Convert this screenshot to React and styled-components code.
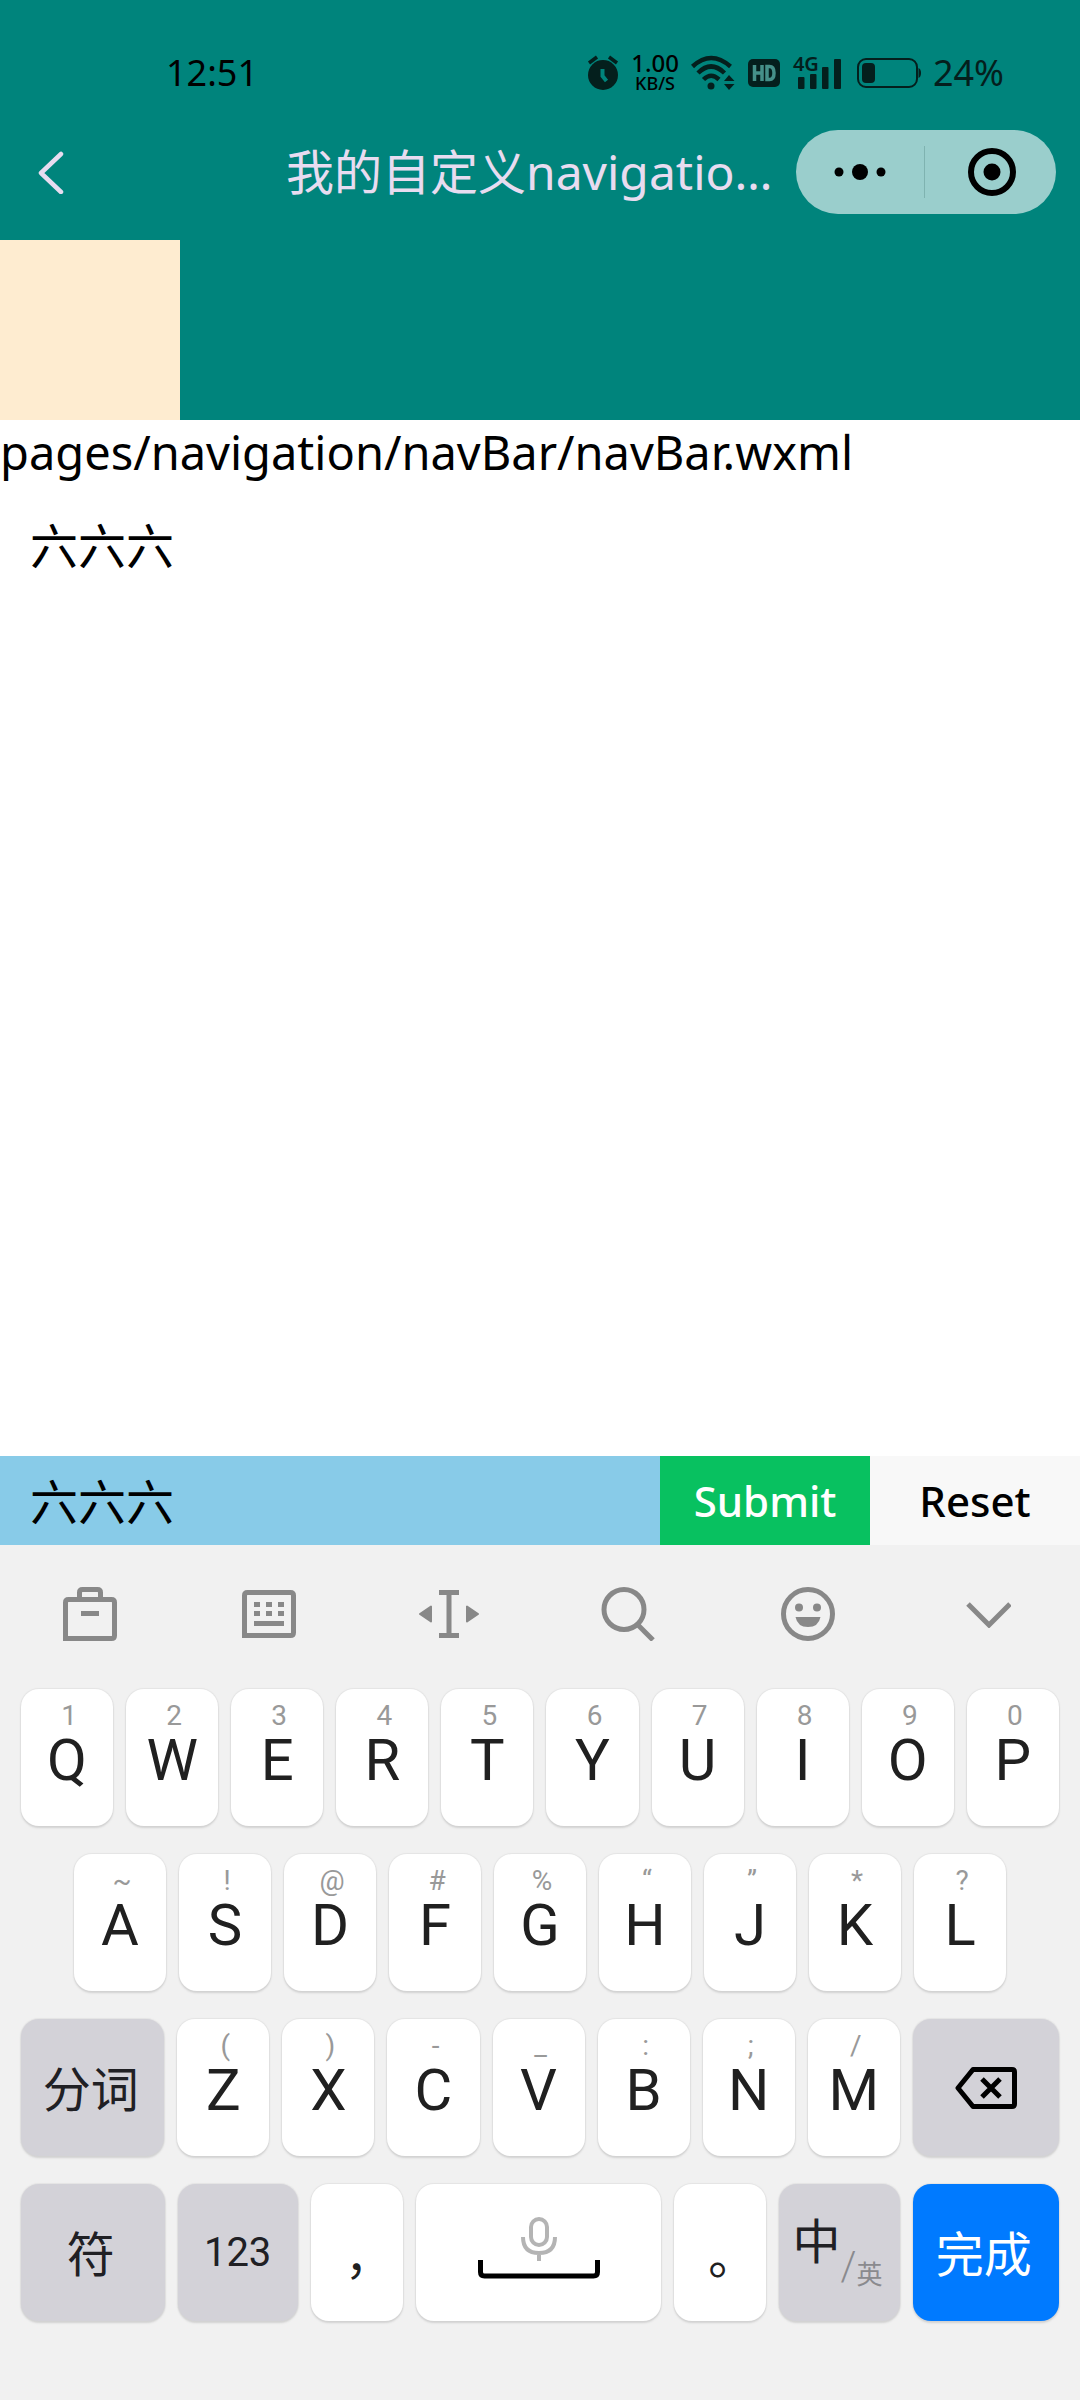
import React, { useState } from "react";
import styled, { createGlobalStyle } from "styled-components";

const latin = `"Noto Sans", "Noto Sans CJK SC", sans-serif`;
const keyFont = `Roboto, "Noto Sans CJK SC", sans-serif`;

const GlobalStyle = createGlobalStyle`
  *, *::before, *::after { box-sizing: border-box; }
  html, body, #root { height: 100%; }
  body { margin: 0; background: #fff; font-family: ${latin}; color: #000; }
  button, input { font: inherit; color: inherit; border: 0; margin: 0; padding: 0; background: none; }
  svg { display: block; flex: none; }
`;

const Screen = styled.div`
  min-height: 100%;
  display: flex;
  flex-direction: column;
`;

const Header = styled.header`
  background: #00847c;
`;

const StatusBar = styled.div`
  height: 130px;
  padding: 16px 76px 0 166px;
  display: flex;
  align-items: center;
  justify-content: space-between;
  font-size: 36px;
  line-height: 48px;
`;

const StatusIcons = styled.div`
  display: flex;
  align-items: center;
  gap: 12px;
  color: #041f1d;
`;

const Speed = styled.div`
  display: flex;
  flex-direction: column;
  align-items: center;
  font-size: 24px;
  font-weight: 500;
  line-height: 20px;
  color: #000;
`;

const SpeedUnit = styled.span`
  font-size: 18px;
`;

const NavBar = styled.nav`
  height: 110px;
  padding: 0 24px 26px 32px;
  display: flex;
  align-items: center;
`;

const BackButton = styled.button`
  width: 254px;
  height: 84px;
  display: flex;
  align-items: center;
`;

const Title = styled.h1`
  flex: 1;
  min-width: 0;
  margin: 0;
  font-size: 48px;
  font-weight: 400;
  line-height: 84px;
  color: #e8dcf0;
  white-space: nowrap;
`;

const Capsule = styled.div`
  width: 260px;
  height: 84px;
  border-radius: 42px;
  background: #9acecc;
  display: flex;
  align-items: center;
`;

const CapsuleButton = styled.button`
  flex: 1;
  height: 52px;
  display: flex;
  align-items: center;
  justify-content: center;

  & + & {
    border-left: 1px solid #7fb3b0;
    padding-left: 4px;
  }
`;

const Swatch = styled.div`
  width: 180px;
  height: 180px;
  background: #feecd0;
`;

const Content = styled.main`
  flex: 1;
`;

const Line = styled.p`
  margin: 0;
  padding: ${(p) => (p.$inset ? "30px" : "0")};
  font-size: ${(p) => (p.$inset ? 48 : 47)}px;
  line-height: 64px;
`;

const Form = styled.form`
  height: 89px;
  display: flex;
`;

const TextField = styled.input`
  flex: 1;
  min-width: 0;
  padding: 0 30px 4px;
  background: #88cbe8;
  font-size: 48px;
  outline: none;
  border-radius: 0;
`;

const FormButton = styled.button`
  width: 210px;
  font-size: 42px;
  font-weight: 500;
  color: ${(p) => (p.$primary ? "#fff" : "#000")};
  background: ${(p) => (p.$primary ? "#08c160" : "#f8f8f8")};
`;

const Keyboard = styled.section`
  background: #f1f1f1;
  padding-bottom: 79px;
  font-family: ${keyFont};
  color: #202020;
`;

const Toolbar = styled.div`
  height: 144px;
  padding: 0 3px 6px 0;
  display: grid;
  grid-template-columns: repeat(6, 1fr);
  color: #888;
`;

const ToolButton = styled.button`
  display: flex;
  align-items: center;
  justify-content: center;
`;

const Rows = styled.div`
  display: flex;
  flex-direction: column;
  gap: 28px;
`;

const Row = styled.div`
  display: flex;
  gap: 13px;
  padding: 0 ${(p) => (p.$inset ? 74 : 21)}px;
`;

const tones = {
  light: { bg: "#fff", fg: "#202020" },
  dark: { bg: "#d3d2d8", fg: "#202024" },
  blue: { bg: "#007aff", fg: "#fff" },
};

const Key = styled.button`
  flex: ${(p) => p.$grow || 91} 1 0;
  min-width: 0;
  height: 137px;
  padding: 0 4px 4px 0;
  border-radius: 18px;
  display: flex;
  flex-direction: column;
  align-items: center;
  justify-content: center;
  font-size: 48px;
  color: ${(p) => tones[p.$tone || "light"].fg};
  background: ${(p) => tones[p.$tone || "light"].bg};
  box-shadow: 0 2px 2px #d2d2d2, 0 0 1px 1px #e4e4e4;
`;

const LetterKey = styled(Key)`
  justify-content: flex-start;
  padding: 11px 2px 0;
  font-size: 58px;
  line-height: 64px;
`;

const Hint = styled.span`
  height: 28px;
  padding-left: 4px;
  font-size: 28px;
  line-height: 32px;
  color: #999;
`;

const CenteredKey = styled(Key)`
  padding: 0 2px;
  font-size: 40px;
`;

const PunctuationKey = styled(Key)`
  padding: 0 2px;
  font-family: "Noto Sans CJK SC", sans-serif;
  font-feature-settings: "halt";
`;

const LanguageLabel = styled.span`
  height: 80px;
  display: flex;
  align-items: flex-end;
`;

const LanguageMain = styled.span`
  align-self: flex-start;
  line-height: 64px;
`;

const LanguageSlash = styled.span`
  font-size: 40px;
  font-weight: 300;
  line-height: 48px;
  color: #8a8a8e;
`;

const LanguageAlt = styled.span`
  font-size: 26px;
  line-height: 32px;
  color: #8a8a8e;
`;

function AlarmIcon() {
  return (
    <svg width="32" height="36" viewBox="0 0 32 36">
      <circle cx="16" cy="20" r="15" fill="currentColor" />
      <path d="M2 8 10 2M30 8 22 2" stroke="currentColor" strokeWidth="3.500" />
      <path d="M15.500 14v7l4 5" fill="none" stroke="#00847c" strokeWidth="4" />
    </svg>
  );
}

function WifiIcon() {
  return (
    <svg width="44" height="36" viewBox="0 0 44 36">
      <g fill="none" stroke="currentColor" strokeWidth="4.500">
        <path d="M1.500 11.500Q20 -5.500 39.500 11.500" />
        <path d="M7 18Q20 5 33.500 18" />
        <path d="M12.500 24.500Q20 17 28 24.500" />
      </g>
      <circle cx="20" cy="31" r="3.500" fill="currentColor" />
      <path d="M33 26l5-6 5.500 6zM33 29l5 6 5.500-6z" fill="currentColor" />
    </svg>
  );
}

function HdIcon() {
  return (
    <svg width="34" height="30" viewBox="0 0 34 30">
      <rect x="1" y="1" width="32" height="28" rx="5" fill="currentColor" />
      <path
        d="M7.500 7v16M15 7v16M7.500 15H15M20 8.500v13h2.500q4.500 0 4.500-6.500t-4.500-6.500z"
        fill="none"
        stroke="#459089"
        strokeWidth="3.500"
      />
    </svg>
  );
}

const Signal = styled.div`
  display: grid;
  width: 50px;
  height: 34px;
  font-size: 20px;
  font-weight: 600;
  line-height: 16px;

  > * {
    grid-area: 1 / 1;
  }
`;

function SignalIcon() {
  return (
    <Signal>
      <span>4G</span>
      <svg width="50" height="34" viewBox="0 0 50 34" fill="currentColor">
        <rect x="5" y="21" width="6.500" height="12" rx="1" />
        <rect x="17" y="18" width="6.500" height="15" rx="1" />
        <rect x="29" y="11" width="6.500" height="22" rx="1" />
        <rect x="41" y="3" width="7" height="30" rx="1" />
      </svg>
    </Signal>
  );
}

function BatteryIcon() {
  return (
    <svg width="66" height="32" viewBox="0 0 66 32">
      <rect x="3" y="2" width="59" height="28" rx="8" fill="none" stroke="currentColor" strokeWidth="2" />
      <rect x="7" y="6" width="13" height="20" rx="4" fill="currentColor" />
      <path d="M63.500 11q2.500 1 2.500 5t-2.500 5z" fill="currentColor" />
    </svg>
  );
}

const stroke = { fill: "none", stroke: "currentColor", strokeWidth: 5 };

const tools = [
  {
    name: "Toolbox",
    icon: (
      <svg width="54" height="54" viewBox="0 0 54 54" {...stroke}>
        <path d="M2.500 51.500V15.500q0-3 3-3h43q3 0 3 3v33q0 3-3 3zM16.500 12V5.500q0-3 3-3h15q3 0 3 3V12M18 26.500h18" />
      </svg>
    ),
  },
  {
    name: "Keyboard layout",
    icon: (
      <svg width="54" height="48" viewBox="0 0 54 48" {...stroke}>
        <path d="M2.500 45.500V5.500q0-3 3-3h43q3 0 3 3v37q0 3-3 3zM12 33.500h30" />
        <path d="M12 14.500h6m6 0h6m6 0h6M12 23.500h6m6 0h6m6 0h6" />
      </svg>
    ),
  },
  {
    name: "Move cursor",
    icon: (
      <svg width="60" height="48" viewBox="0 0 60 48" {...stroke}>
        <path d="M20 2.500h20M20 45.500h20M30 2.500v43" />
        <path d="M1 24 12 16.500v15zM59 24 48 16.500v15z" fill="currentColor" strokeWidth="2" strokeLinejoin="round" />
      </svg>
    ),
  },
  {
    name: "Search",
    icon: (
      <svg width="54" height="54" viewBox="0 0 54 54" {...stroke}>
        <circle cx="23" cy="22.500" r="20" />
        <path d="M37 38 52 53" />
      </svg>
    ),
  },
  {
    name: "Emoji",
    icon: (
      <svg width="54" height="54" viewBox="0 0 54 54">
        <circle cx="27" cy="27" r="24.500" {...stroke} />
        <circle cx="18" cy="20.500" r="4" fill="currentColor" />
        <circle cx="36" cy="20.500" r="4" fill="currentColor" />
        <path d="M14.500 30h25q-2 10-12.500 10t-12.500-10z" fill="currentColor" />
      </svg>
    ),
  },
  {
    name: "Hide keyboard",
    icon: (
      <svg width="48" height="28" viewBox="0 0 48 28" {...stroke}>
        <path d="M5 4 26 25 47 4" />
      </svg>
    ),
  },
];

function BackspaceIcon() {
  return (
    <svg width="62" height="42" viewBox="0 0 62 42" fill="none" stroke="#000" strokeWidth="5" strokeLinejoin="round">
      <path d="M3 21 18 2.500h39q2.500 0 2.500 2.500v32q0 2.500-2.500 2.500H18z" />
      <path d="M27 12 45 30M45 12 27 30" />
    </svg>
  );
}

function SpaceIcon() {
  return (
    <svg width="122" height="76" viewBox="0 0 122 76" fill="none">
      <g stroke="#b4b4b4" strokeWidth="4">
        <rect x="53" y="4" width="16" height="26" rx="8" />
        <path d="M45 22q0 16 16 16t16-16M61 38v8" />
      </g>
      <path d="M2.500 45v12q0 4 4 4h109q4 0 4-4V45" stroke="#000" strokeWidth="5" />
    </svg>
  );
}

const row1 = [..."QWERTYUIOP"].map((c, i) => [c, "1234567890"[i]]);
const row2 = [..."ASDFGHJKL"].map((c, i) => [c, "~!@#%“”*?"[i]]);
const row3 = [..."ZXCVBNM"].map((c, i) => [c, "()-_:;/"[i]]);

const letters = (list) =>
  list.map(([letter, hint]) => (
    <LetterKey key={letter} type="button">
      <Hint>{hint}</Hint>
      {letter}
    </LetterKey>
  ));

export default function App() {
  const [text, setText] = useState("六六六");

  return (
    <Screen>
      <GlobalStyle />
      <Header>
        <StatusBar>
          <span>12:51</span>
          <StatusIcons>
            <AlarmIcon />
            <Speed>
              1.00
              <SpeedUnit>KB/S</SpeedUnit>
            </Speed>
            <WifiIcon />
            <HdIcon />
            <SignalIcon />
            <BatteryIcon />
            <span>24%</span>
          </StatusIcons>
        </StatusBar>
        <NavBar>
          <BackButton type="button" aria-label="Back">
            <svg width="40" height="44" viewBox="0 0 40 44">
              <path d="M29 4 9 23 29 42" fill="none" stroke="#e8dcf0" strokeWidth="4.500" strokeLinecap="round" strokeLinejoin="round" />
            </svg>
          </BackButton>
          <Title>我的自定义navigatio…</Title>
          <Capsule>
            <CapsuleButton type="button" aria-label="More">
              <svg width="52" height="18" viewBox="0 0 52 18">
                <circle cx="5" cy="9" r="4.500" />
                <circle cx="26" cy="9" r="8" />
                <circle cx="47" cy="9" r="4.500" />
              </svg>
            </CapsuleButton>
            <CapsuleButton type="button" aria-label="Close">
              <svg width="48" height="48" viewBox="0 0 48 48">
                <circle cx="24" cy="24" r="21" fill="none" stroke="#000" strokeWidth="6" />
                <circle cx="24" cy="24" r="8.500" />
              </svg>
            </CapsuleButton>
          </Capsule>
        </NavBar>
        <Swatch />
      </Header>

      <Content>
        <Line>pages/navigation/navBar/navBar.wxml</Line>
        <Line $inset>{text}</Line>
      </Content>

      <Form onSubmit={(e) => e.preventDefault()} onReset={() => setText("")}>
        <TextField aria-label="Text" value={text} onChange={(e) => setText(e.target.value)} />
        <FormButton type="submit" $primary>Submit</FormButton>
        <FormButton type="reset">Reset</FormButton>
      </Form>

      <Keyboard aria-label="Keyboard">
        <Toolbar>
          {tools.map((tool) => (
            <ToolButton key={tool.name} type="button" aria-label={tool.name}>
              {tool.icon}
            </ToolButton>
          ))}
        </Toolbar>
        <Rows>
          <Row>{letters(row1)}</Row>
          <Row $inset>{letters(row2)}</Row>
          <Row>
            <Key type="button" $tone="dark" $grow={144}>分词</Key>
            {letters(row3)}
            <CenteredKey type="button" $tone="dark" $grow={147} aria-label="Backspace">
              <BackspaceIcon />
            </CenteredKey>
          </Row>
          <Row>
            <Key type="button" $tone="dark" $grow={144}>符</Key>
            <CenteredKey type="button" $tone="dark" $grow={120}>123</CenteredKey>
            <PunctuationKey type="button">，</PunctuationKey>
            <CenteredKey type="button" $grow={249} aria-label="Space">
              <SpaceIcon />
            </CenteredKey>
            <PunctuationKey type="button">。</PunctuationKey>
            <Key type="button" $tone="dark" $grow={120}>
              <LanguageLabel>
                <LanguageMain>中</LanguageMain>
                <LanguageSlash>/</LanguageSlash>
                <LanguageAlt>英</LanguageAlt>
              </LanguageLabel>
            </Key>
            <Key type="button" $tone="blue" $grow={147}>完成</Key>
          </Row>
        </Rows>
      </Keyboard>
    </Screen>
  );
}
